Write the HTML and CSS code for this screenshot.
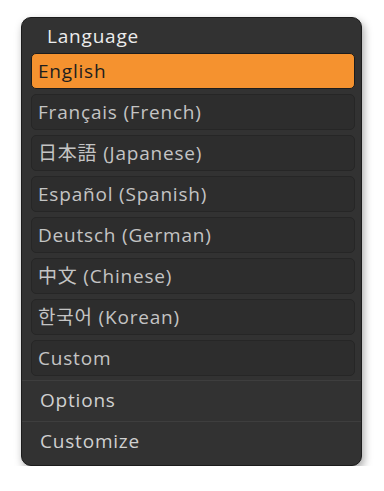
FILE: index.html
```html
<!DOCTYPE html>
<html lang="en">
<head>
    <meta charset="UTF-8">
    <meta name="viewport" content="width=device-width, initial-scale=1.0">
    <title>Language</title>
    <link rel="stylesheet" href="styles.css">
</head>
<body>
    <div class="menu">
        <div class="menu-title">Language</div>
        <div class="lang-list">
            <div class="lang-item selected">English</div>
            <div class="lang-item">Français (French)</div>
            <div class="lang-item">日本語 (Japanese)</div>
            <div class="lang-item">Español (Spanish)</div>
            <div class="lang-item">Deutsch (German)</div>
            <div class="lang-item">中文 (Chinese)</div>
            <div class="lang-item">한국어 (Korean)</div>
            <div class="lang-item">Custom</div>
        </div>
        <div class="menu-row">Options</div>
        <div class="menu-row">Customize</div>
    </div>
</body>
</html>
```

FILE: styles.css
```css
body {
    margin: 0;
    background: #ffffff;
    font-family: "Open Sans", "Noto Sans CJK JP", "Noto Sans CJK KR", sans-serif;
    font-size: 19px;
    letter-spacing: 0.8px;
}
.menu {
    margin: 17px 0 0 21px;
    width: 339px;
    background-color: #323232;
    border: 1px solid #1c1c1c;
    border-radius: 10px;
    box-shadow: 2px 4px 8px rgba(0,0,0,0.35);
    padding-bottom: 3px;
}
.menu-title {
    color: #ececec;
    height: 35px;
    line-height: 36px;
    padding-left: 25px;
}
.lang-list {
    display: flex;
    flex-direction: column;
    gap: 5px;
    padding: 0 6px 4px 9px;
}
.lang-item {
    height: 34px;
    line-height: 34px;
    padding-left: 6px;
    color: #c4c4c4;
    background-color: #2d2d2d;
    border: 1px solid #262626;
    border-radius: 5px;
}
.lang-item.selected {
    background-color: #f5922f;
    border-color: #1c1c1c;
    color: #1e1e1e;
}
.menu-row {
    border-top: 1px solid #3e3e3e;
    height: 40px;
    line-height: 38px;
    padding-left: 18px;
    color: #d0d0d0;
}
```
